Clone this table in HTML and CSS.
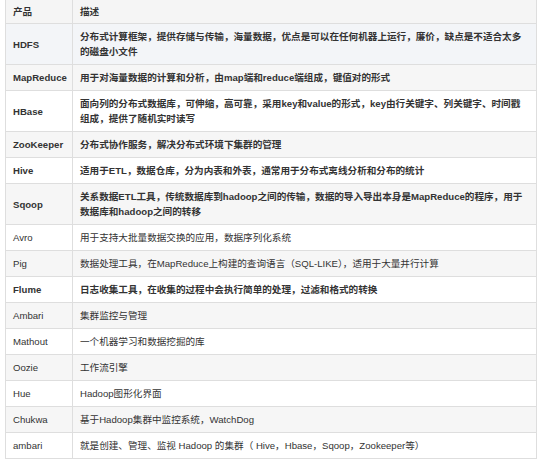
FILE: index.html
```html
<!DOCTYPE html>
<html lang="zh-CN">
<head>
<meta charset="utf-8">
<title>Hadoop 生态</title>
<link rel="stylesheet" href="styles.css">
</head>
<body>
<table class="eco">
  <colgroup><col class="c-name"><col class="c-desc"></colgroup>
  <thead>
    <tr><th>产品</th><th>描述</th></tr>
  </thead>
  <tbody>
    <tr class="b hover"><td>HDFS</td><td>分布式计算框架，提供存储与传输，海量数据，优点是可以在任何机器上运行，廉价，缺点是不适合太多的磁盘小文件</td></tr>
    <tr class="b"><td>MapReduce</td><td>用于对海量数据的计算和分析，由map端和reduce端组成，键值对的形式</td></tr>
    <tr class="b"><td>HBase</td><td>面向列的分布式数据库，可伸缩，高可靠，采用key和value的形式，key由行关键字、列关键字、时间戳组成，提供了随机实时读写</td></tr>
    <tr class="b"><td>ZooKeeper</td><td>分布式协作服务，解决分布式环境下集群的管理</td></tr>
    <tr class="b"><td>Hive</td><td>适用于ETL，数据仓库，分为内表和外表，通常用于分布式离线分析和分布的统计</td></tr>
    <tr class="b"><td>Sqoop</td><td>关系数据ETL工具，传统数据库到hadoop之间的传输，数据的导入导出本身是MapReduce的程序，用于数据库和hadoop之间的转移</td></tr>
    <tr><td>Avro</td><td>用于支持大批量数据交换的应用，数据序列化系统</td></tr>
    <tr><td>Pig</td><td>数据处理工具，在MapReduce上构建的查询语言（SQL-LIKE），适用于大量并行计算</td></tr>
    <tr class="b"><td>Flume</td><td>日志收集工具，在收集的过程中会执行简单的处理，过滤和格式的转换</td></tr>
    <tr><td>Ambari</td><td>集群监控与管理</td></tr>
    <tr><td>Mathout</td><td>一个机器学习和数据挖掘的库</td></tr>
    <tr><td>Oozie</td><td>工作流引擎</td></tr>
    <tr><td>Hue</td><td>Hadoop图形化界面</td></tr>
    <tr><td>Chukwa</td><td>基于Hadoop集群中监控系统，WatchDog</td></tr>
    <tr><td>ambari</td><td>就是创建、管理、监视 Hadoop 的集群（ Hive，Hbase，Sqoop，Zookeeper等）</td></tr>
  </tbody>
</table>
</body>
</html>
```

FILE: styles.css
```css
html, body {
  margin: 0;
  padding: 0;
  background: #ffffff;
}

body {
  font-family: "Liberation Sans", "Noto Sans CJK TC", sans-serif;
  font-size: 9.6px;
  line-height: 15px;
  color: #333333;
}

.eco {
  border-collapse: collapse;
  table-layout: fixed;
  width: 532px;
  margin: 0 0 0 5px;
  border: 1px solid #dedede;
  border-top: 0;
}

.c-name { width: 67px; }

.eco th,
.eco td {
  border: 1px solid #dedede;
  padding: 5px 7px;
  text-align: left;
  vertical-align: middle;
}

.eco th {
  border-top: 0;
  padding-top: 4px;
  padding-bottom: 4px;
  font-weight: bold;
  background: #f5f5f5;
}

.eco tbody tr:nth-child(even) { background: #f6f6f6; }
.eco tbody tr.hover { background: #f3f5f8; }

.eco tr.b td { font-weight: bold; }
```
